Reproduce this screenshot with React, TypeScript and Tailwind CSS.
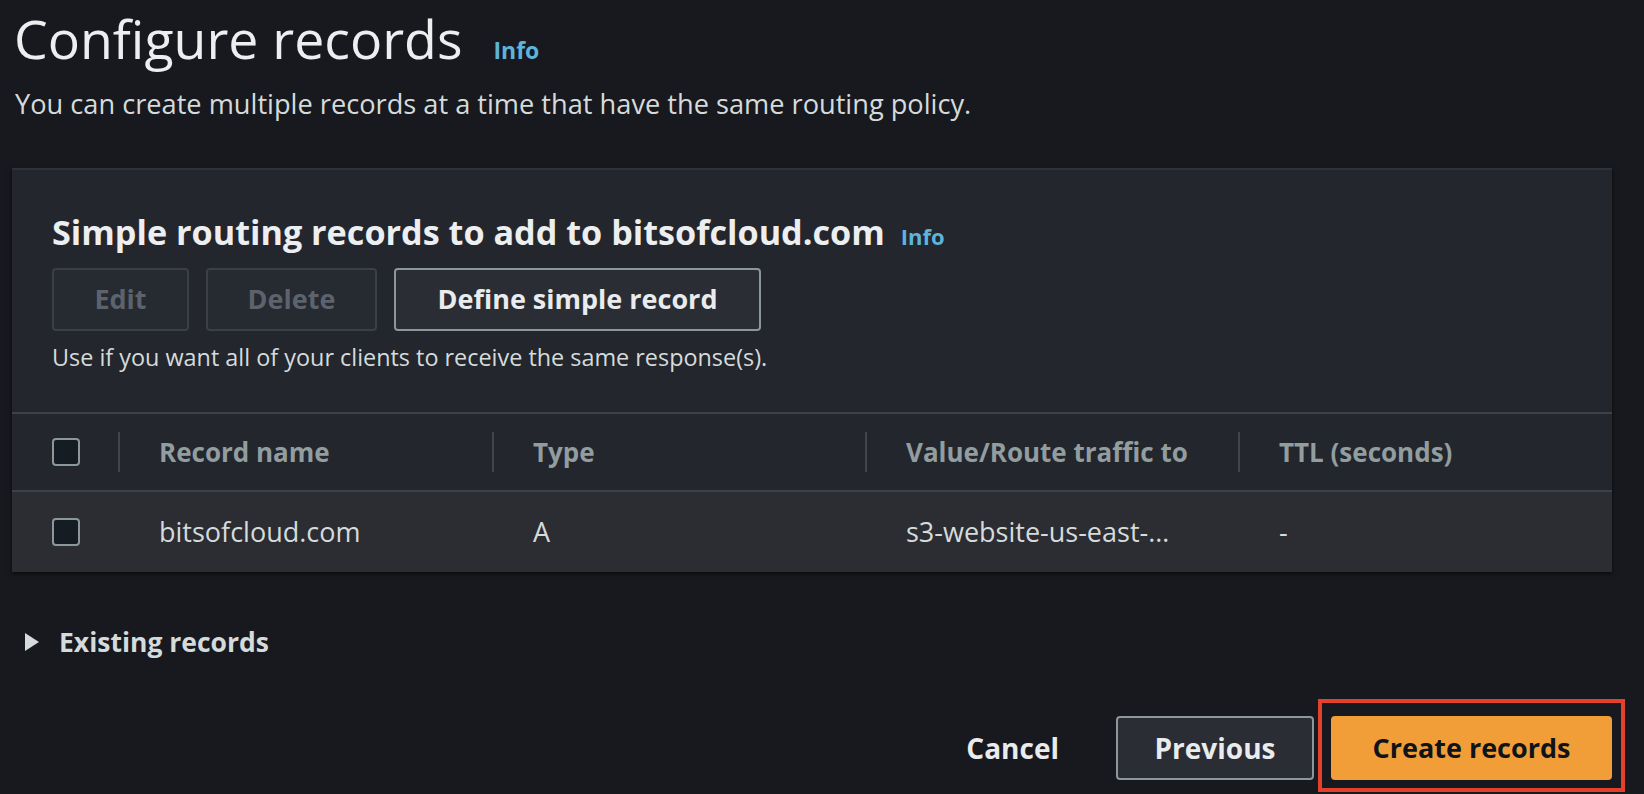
import React from "react";

function Checkbox() {
  return (
    <div className="w-[28px] h-[28px] rounded-[4px] border-2 border-[#8c9799] bg-[#161c24]" />
  );
}

export default function App() {
  const cols = ["Record name", "Type", "Value/Route traffic to", "TTL (seconds)"];
  const vals = ["bitsofcloud.com", "A", "s3-website-us-east-…", "-"];
  return (
    <div
      className="w-[1644px] h-[794px] overflow-hidden bg-[#18191e] text-[#e9ebed]"
      style={{ fontFamily: '"Open Sans", "Noto Sans", sans-serif' }}
    >
      <div className="pt-[6px] pl-[14px] flex items-baseline">
        <h1 className="text-[53.6px] leading-[65px] font-normal text-[#eceeef]">Configure records</h1>
        <span className="ml-[31px] text-[23px] font-bold text-[#5db4da]">Info</span>
      </div>
      <p className="mt-[16px] pl-[15px] text-[27.2px] leading-[34px] text-[#d5dbdb]">
        You can create multiple records at a time that have the same routing policy.
      </p>

      <div className="mt-[47px] ml-[12px] w-[1600px] bg-[#23262d] border-t-2 border-[#2f3239] shadow-[0_2px_4px_rgba(0,0,0,0.6)]">
        <div className="pl-[40px] pt-[40px]">
          <div className="flex items-baseline">
            <h2 className="text-[34.2px] leading-[44px] font-bold text-[#eceeef]">
              Simple routing records to add to bitsofcloud.com
            </h2>
            <span className="ml-[16px] text-[22px] font-bold text-[#5db4da]">Info</span>
          </div>
          <div className="mt-[14px] flex gap-[17px]">
            <button className="w-[137px] h-[63px] rounded-[4px] border-2 border-[#3b3f46] bg-[#262a31] text-[27px] font-bold text-[#5c636d]">
              Edit
            </button>
            <button className="w-[171px] h-[63px] rounded-[4px] border-2 border-[#3b3f46] bg-[#262a31] text-[27px] font-bold text-[#5c636d]">
              Delete
            </button>
            <button className="w-[367px] h-[63px] rounded-[4px] border-2 border-[#8c9799] bg-[#2a2d33] text-[27px] font-bold text-[#e9ebed]">
              Define simple record
            </button>
          </div>
          <p className="mt-[12px] text-[23.4px] leading-[28px] text-[#d5dbdb]">
            Use if you want all of your clients to receive the same response(s).
          </p>
        </div>

        <div className="mt-[41px]">
          <div className="grid grid-cols-[106px_374px_373px_373px_1fr] h-[78px] border-t-2 border-[#3d4148] bg-[#23262d]">
            <div className="flex items-center pl-[40px]">
              <Checkbox />
            </div>
            {cols.map((c) => (
              <div key={c} className="relative flex items-center pl-[41px]">
                <div className="absolute left-0 top-[18px] h-[40px] w-[2px] bg-[#41464e]" />
                <span className="text-[26px] font-bold text-[#919d9f]">{c}</span>
              </div>
            ))}
          </div>
          <div className="grid grid-cols-[106px_374px_373px_373px_1fr] h-[82px] border-t-2 border-[#3d4148] bg-[#2b2d32]">
            <div className="flex items-center pl-[40px]">
              <Checkbox />
            </div>
            {vals.map((v) => (
              <div key={v} className="flex items-center pl-[41px]">
                <span className="text-[27px] text-[#d5dbdb] whitespace-nowrap">{v}</span>
              </div>
            ))}
          </div>
        </div>
      </div>

      <div className="mt-[52px] pl-[24px] flex items-center">
        <svg width="16" height="20" viewBox="0 0 16 20" className="shrink-0">
          <path d="M1 1 L15 10 L1 19 Z" fill="#d5dbdb" />
        </svg>
        <span className="ml-[19px] text-[26.5px] leading-[36px] font-bold text-[#d5dbdb]">Existing records</span>
      </div>

      <div className="mt-[56px] w-[1612px] flex justify-end gap-[17px]">
        <button className="h-[64px] px-[40px] text-[28px] font-bold text-[#e9ebed]">Cancel</button>
        <button className="w-[198px] h-[64px] rounded-[4px] border-2 border-[#8c9799] bg-[#2a2d33] text-[28px] font-bold text-[#e9ebed]">
          Previous
        </button>
        <div className="relative">
          <button className="w-[281px] h-[64px] rounded-[4px] bg-[#f29e38] text-[27px] font-bold text-[#0f141a]">
            Create records
          </button>
          <div className="absolute -left-[13px] -right-[13px] -top-[17px] -bottom-[12px] border-4 border-[#e5402b] pointer-events-none" />
        </div>
      </div>
    </div>
  );
}
